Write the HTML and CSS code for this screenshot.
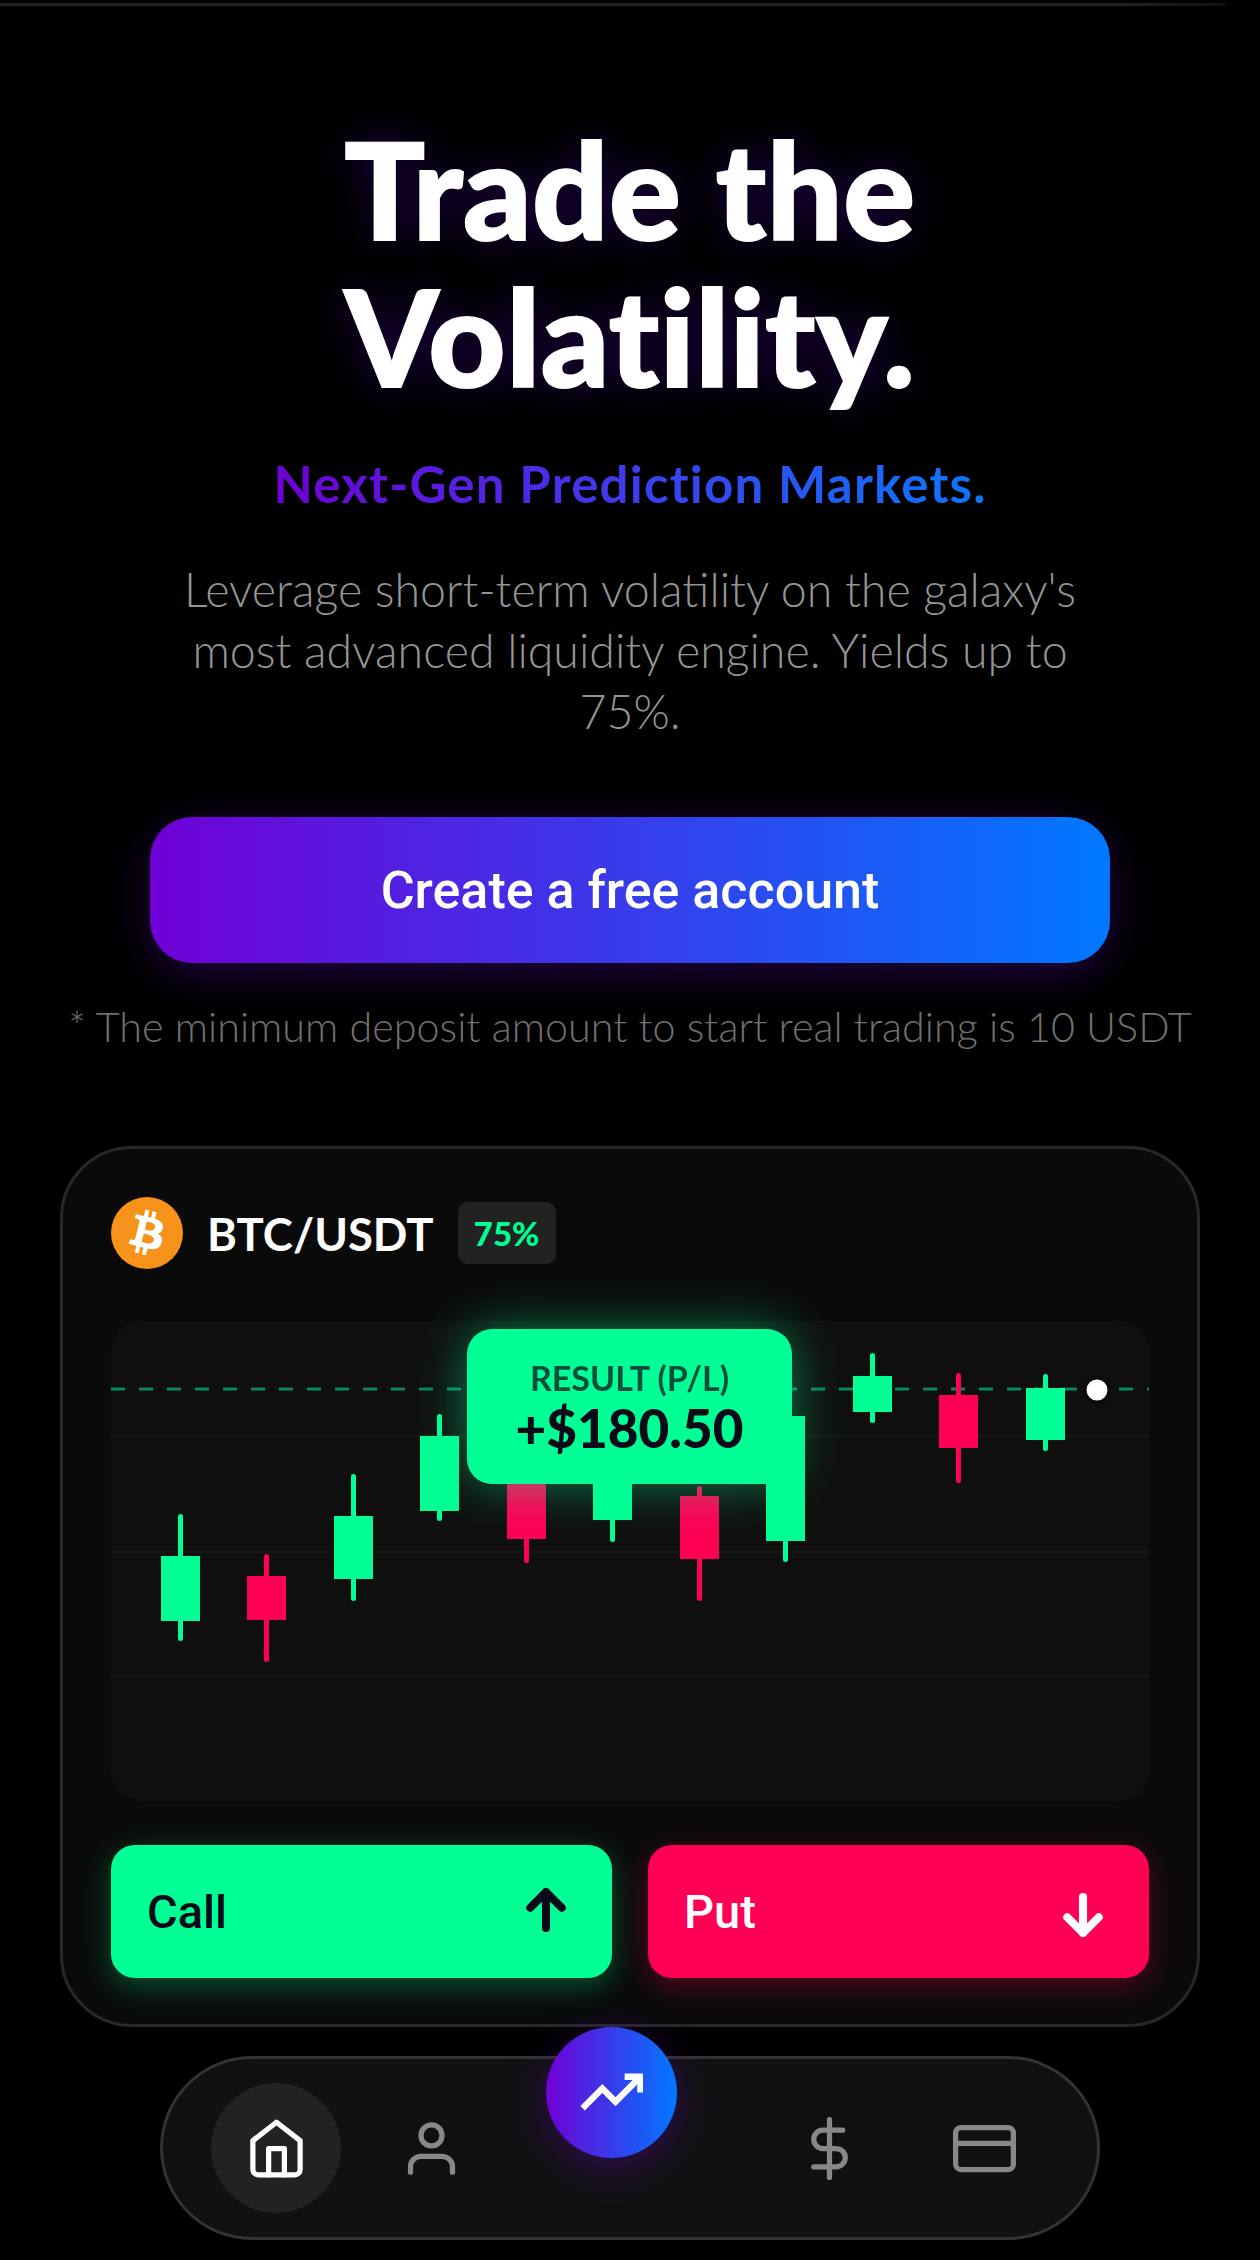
FILE: index.html
```html
<!DOCTYPE html>
<html lang="en">
<head>
<meta charset="utf-8">
<title>Trade the Volatility</title>
<link rel="stylesheet" href="styles.css">
</head>
<body>
<div class="topline"></div>
<main class="page">
  <section class="hero">
    <h1 class="title">Trade the<br>Volatility.</h1>
    <p class="sub">Next-Gen Prediction Markets.</p>
    <p class="lead">Leverage short-term volatility on the galaxy's<br>most advanced liquidity engine. Yields up to<br>75%.</p>
    <a class="cta">Create a free account</a>
    <p class="note">* The minimum deposit amount to start real trading is 10 USDT</p>
  </section>

  <section class="card">
    <header class="pair">
      <svg class="coin" viewBox="0 0 24 24"><circle cx="12" cy="12" r="12" fill="#f7931a"/><path fill="#fff" fill-rule="evenodd" d="M17.288 10.291c.24-1.59-.974-2.45-2.64-3.03l.54-2.153-1.315-.33-.525 2.107c-.345-.087-.705-.167-1.064-.25l.526-2.127-1.32-.33-.54 2.165c-.285-.067-.565-.132-.84-.2l-1.815-.45-.35 1.407s.975.225.955.236c.535.136.63.486.615.766l-1.477 5.92c-.075.166-.24.406-.614.314.015.02-.96-.24-.96-.24l-.66 1.51 1.71.426.93.242-.54 2.19 1.32.327.54-2.17c.36.1.705.19 1.05.273l-.51 2.154 1.32.33.545-2.19c2.24.427 3.93.257 4.64-1.774.57-1.637-.03-2.58-1.217-3.196.854-.193 1.5-.76 1.68-1.93h.01zm-3.01 4.22c-.404 1.64-3.157.75-4.05.53l.72-2.9c.896.23 3.757.67 3.33 2.37zm.41-4.24c-.37 1.49-2.662.735-3.405.55l.654-2.64c.744.18 3.137.524 2.75 2.084v.006z"/></svg>
      <span class="pair-name">BTC/USDT</span>
      <span class="badge">75%</span>
    </header>

    <div class="chart">
      <svg class="plot" viewBox="0 0 1038 480">
        <g class="grid">
          <line x1="0" x2="1038" y1="115" y2="115"/>
          <line x1="0" x2="1038" y1="231" y2="231"/>
          <line x1="0" x2="1038" y1="355" y2="355"/>
        </g>
        <line class="price" x1="0" x2="1038" y1="68" y2="68"/>
        <g class="up">
          <rect x="67" y="193" width="5" height="127" rx="2.5"/><rect x="50" y="235" width="39" height="65"/>
          <rect x="240" y="153" width="5" height="127" rx="2.5"/><rect x="223" y="195" width="39" height="63"/>
          <rect x="326" y="93" width="5" height="107" rx="2.5"/><rect x="309" y="115" width="39" height="75"/>
          <rect x="499" y="100" width="5" height="121" rx="2.5"/><rect x="482" y="110" width="39" height="89"/>
          <rect x="672" y="60" width="5" height="181" rx="2.5"/><rect x="655" y="95" width="39" height="125"/>
          <rect x="759" y="32" width="5" height="70" rx="2.5"/><rect x="742" y="55" width="39" height="36"/>
          <rect x="932" y="53" width="5" height="77" rx="2.5"/><rect x="915" y="67" width="39" height="52"/>
        </g>
        <g class="down">
          <rect x="153" y="233" width="5" height="108" rx="2.5"/><rect x="136" y="255" width="39" height="44"/>
          <rect x="413" y="130" width="5" height="112" rx="2.5"/><rect x="396" y="150" width="39" height="68"/>
          <rect x="586" y="165" width="5" height="115" rx="2.5"/><rect x="569" y="175" width="39" height="63"/>
          <rect x="845" y="52" width="5" height="110" rx="2.5"/><rect x="828" y="74" width="39" height="53"/>
        </g>
        <circle class="dot" cx="986" cy="69" r="12"/>
      </svg>
      <div class="result">
        <span class="result-label">RESULT (P/L)</span>
        <strong class="result-value">+$180.50</strong>
      </div>
    </div>

    <div class="actions">
      <button class="trade call">Call
        <svg class="arrow" viewBox="0 0 24 24"><path d="M12 20V4M5 11l7-7 7 7"/></svg>
      </button>
      <button class="trade put">Put
        <svg class="arrow" viewBox="0 0 24 24"><path d="M12 4v16M5 13l7 7 7-7"/></svg>
      </button>
    </div>
  </section>

  <nav class="nav">
    <span class="nav-item active"><svg viewBox="0 0 24 24"><path d="m3 9 9-7 9 7v11a2 2 0 0 1-2 2H5a2 2 0 0 1-2-2z"/><polyline points="9 22 9 12 15 12 15 22"/></svg></span>
    <span class="nav-item"><svg viewBox="0 0 24 24"><path d="M20 21v-2a4 4 0 0 0-4-4H8a4 4 0 0 0-4 4v2"/><circle cx="12" cy="7" r="4"/></svg></span>
    <span class="nav-gap"></span>
    <span class="nav-item"><svg viewBox="0 0 24 24"><line x1="12" y1="1" x2="12" y2="23"/><path d="M17 5H9.5a3.5 3.5 0 0 0 0 7h5a3.5 3.5 0 0 1 0 7H6"/></svg></span>
    <span class="nav-item"><svg viewBox="0 0 24 24"><rect x="1" y="4" width="22" height="16" rx="2" ry="2"/><line x1="1" y1="10" x2="23" y2="10"/></svg></span>
    <span class="nav-fab"><svg viewBox="0 0 24 24"><polyline points="23 6 13.5 15.5 8.5 10.5 1 18"/><polyline points="17 6 23 6 23 12"/></svg></span>
  </nav>
</main>
</body>
</html>
```
FILE: styles.css
```css
* { box-sizing: border-box; }
html, body { margin: 0; padding: 0; background: #000; }
body { width: 1260px; height: 2260px; overflow: hidden; font-family: "Lato", sans-serif; color: #fff; position: relative; }
.topline { height: 3px; margin-top: 3px; width: 1225px; background: linear-gradient(90deg, #222 0, #222 92%, #111 100%); }
.page { display: flex; flex-direction: column; align-items: center; }

.hero { display: flex; flex-direction: column; align-items: center; text-align: center; width: 100%; }
.title { margin: 109px 0 0; font-size: 134px; line-height: 147px; font-weight: 900; letter-spacing: .5px; word-spacing: 2px; -webkit-text-stroke: 2px #fff; text-shadow: 0 0 40px rgba(112, 0, 255, .3); }
.sub { margin: 44px 0 0; font-size: 51px; line-height: 62px; font-weight: 700; letter-spacing: 1.2px; background: linear-gradient(90deg, #7000d6, #0a78ff); -webkit-background-clip: text; background-clip: text; color: transparent; }
.lead { margin: 44px 0 0; font-size: 46.5px; line-height: 61px; font-weight: 300; color: #949494; }
.cta { display: flex; align-items: center; justify-content: center; width: 960px; height: 146px; margin-top: 75px; border-radius: 42px; font-family: "Roboto", sans-serif; font-weight: 500; font-size: 52px; background: linear-gradient(90deg, #7000d6, #0078ff); box-shadow: 0 10px 40px rgba(112, 0, 214, .3); }
.note { margin: 38px 0 0; font-size: 41.3px; line-height: 50px; font-weight: 300; color: #707070; white-space: nowrap; }

.card { width: 1140px; height: 881px; margin-top: 95px; padding: 48px; border: 3px solid #282828; border-radius: 72px; background: #0a0a0a; display: flex; flex-direction: column; }
.pair { display: flex; align-items: center; height: 72px; }
.coin { width: 72px; height: 72px; flex: none; }
.pair-name { margin-left: 24px; font-size: 45.5px; font-weight: 700; }
.badge { margin-left: 24px; width: 98px; height: 62px; border-radius: 10px; background: #222; color: #00ff94; font-size: 33px; font-weight: 900; display: flex; align-items: center; justify-content: center; }

.chart { position: relative; height: 480px; margin-top: 52px; border-radius: 30px; background: #0f0f0f; }
.plot { display: block; width: 100%; height: 100%; }
.grid line { stroke: #161616; stroke-width: 3; }
.price { stroke: #07895c; stroke-width: 3; stroke-dasharray: 14 14; }
.up rect { fill: #00ff94; }
.down rect { fill: #ff0055; }
.dot { fill: #fff; stroke: #0a0a0a; stroke-width: 3; }
.result { position: absolute; left: 356px; top: 8px; width: 325px; height: 155px; border-radius: 25px; background: #00ff94; color: #0a0a1a; box-shadow: 0 0 50px rgba(0, 255, 148, .45); display: flex; flex-direction: column; align-items: center; justify-content: center; }
.result-label { font-size: 34px; line-height: 42px; font-weight: 700; opacity: .72; }
.result-value { font-size: 53px; line-height: 58px; font-weight: 900; }

.actions { display: flex; gap: 36px; margin-top: 44px; }
.trade { flex: 1; height: 133px; border: 0; border-radius: 24px; padding: 0 39px 0 36px; display: flex; align-items: center; justify-content: space-between; font-family: "Roboto", sans-serif; font-size: 47px; font-weight: 500; }
.call { background: #00ff94; color: #0a0a1a; box-shadow: 0 8px 30px rgba(0, 255, 148, .3); }
.put { background: #ff0055; color: #fff; box-shadow: 0 8px 30px rgba(255, 0, 85, .3); }
.arrow { width: 54px; height: 54px; fill: none; stroke: currentColor; stroke-width: 3.6; stroke-linecap: round; stroke-linejoin: round; }
.call .arrow { margin-top: -4px; }
.put .arrow { margin-top: 6px; }

.nav { position: relative; width: 940px; height: 184px; margin-top: 29px; padding: 0 50px 0 48px; border: 3px solid #333; border-radius: 92px; background: #111; display: flex; align-items: center; gap: 25px; }
.nav-item { width: 130px; height: 130px; flex: none; border-radius: 50%; display: flex; align-items: center; justify-content: center; color: #888; }
.nav-item svg { width: 63px; height: 63px; fill: none; stroke: currentColor; stroke-width: 2; stroke-linecap: round; stroke-linejoin: round; }
.nav-item.active { background: #222; color: #fff; }
.nav-gap { width: 218px; flex: none; }
.nav-fab { position: absolute; left: 383px; top: -32px; width: 131px; height: 131px; border-radius: 50%; display: flex; align-items: center; justify-content: center; background: linear-gradient(90deg, #7000d6, #0078ff); box-shadow: 0 10px 40px rgba(112, 0, 214, .35); }
.nav-fab svg { width: 63px; height: 63px; fill: none; stroke: #fff; stroke-width: 2.4; }
```
